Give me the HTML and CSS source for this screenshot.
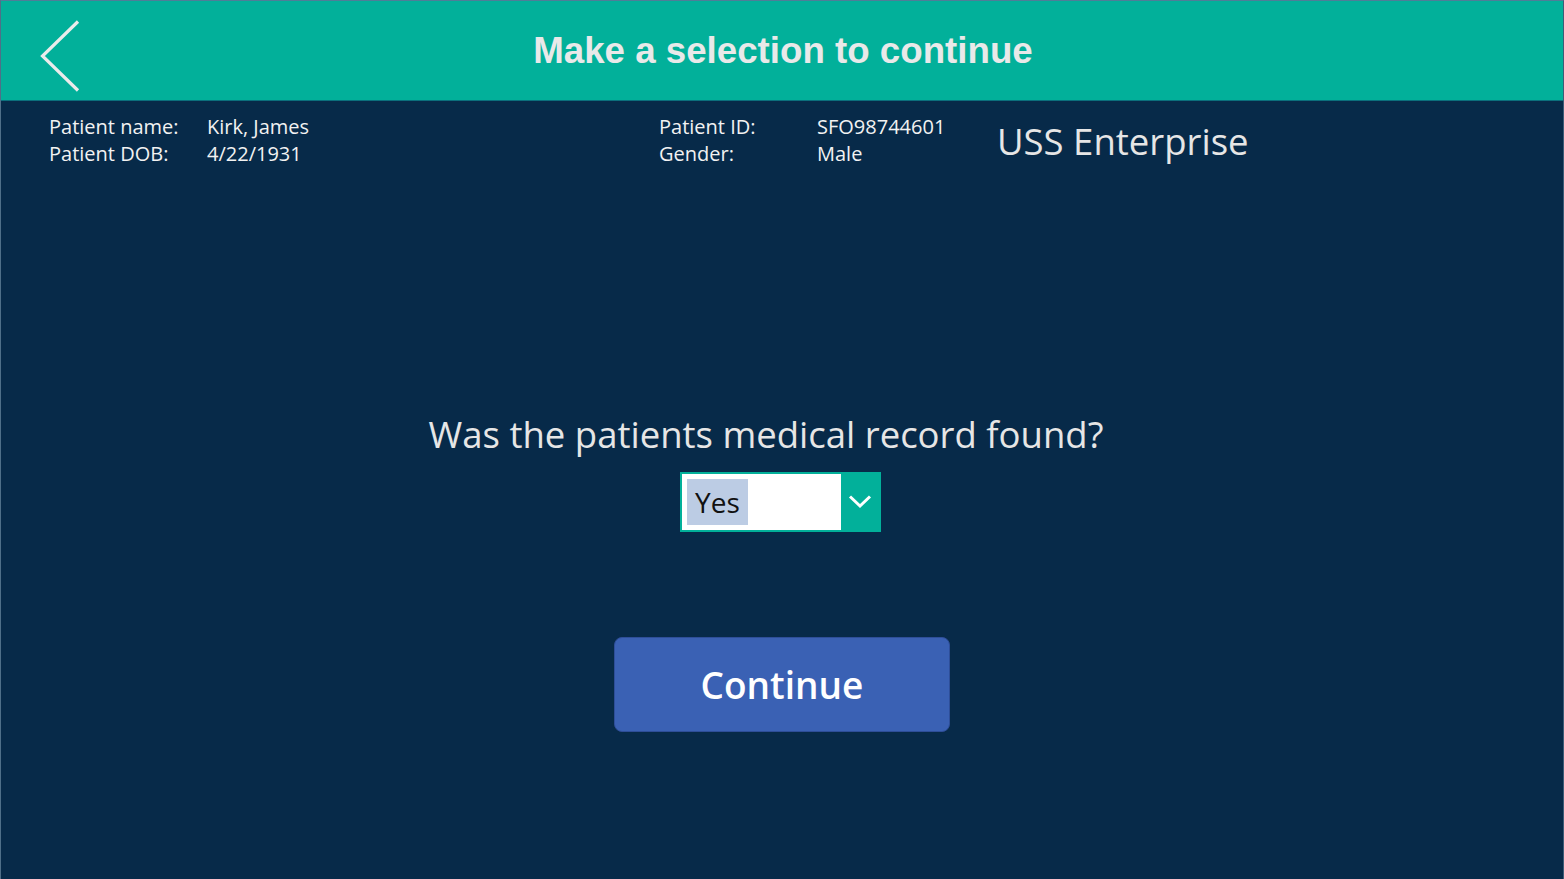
FILE: index.html
```html
<!DOCTYPE html>
<html lang="en">
<head>
<meta charset="utf-8">
<title>Make a selection to continue</title>
<link rel="stylesheet" href="styles.css">
</head>
<body>
<div class="screen">
  <header class="topbar">
    <button class="back" aria-label="Back">
      <svg width="40" height="72" viewBox="0 0 40 72"><polyline points="38,1.5 2.5,36 38,70.5" fill="none" stroke="#ebebeb" stroke-width="3.2"/></svg>
    </button>
    <h1 class="title">Make a selection to continue</h1>
  </header>
  <section class="info">
    <div class="group g1">
      <span class="label">Patient name:</span><span class="value">Kirk, James</span>
      <span class="label">Patient DOB:</span><span class="value">4/22/1931</span>
    </div>
    <div class="group g2">
      <span class="label">Patient ID:</span><span class="value">SFO98744601</span>
      <span class="label">Gender:</span><span class="value">Male</span>
    </div>
    <div class="ship">USS Enterprise</div>
  </section>
  <main class="content">
    <p class="question">Was the patients medical record found?</p>
    <div class="dropdown">
      <div class="field"><span class="selected">Yes</span></div>
      <div class="chev">
        <svg width="24" height="14" viewBox="0 0 24 14"><polyline points="2,1.5 12,11 22,1.5" fill="none" stroke="#ffffff" stroke-width="3"/></svg>
      </div>
    </div>
    <button class="continue">Continue</button>
  </main>
</div>
</body>
</html>
```
FILE: styles.css
```css
* { box-sizing: border-box; }
html, body { margin: 0; padding: 0; }
body {
  width: 1564px;
  height: 879px;
  overflow: hidden;
  background: #072a49;
  font-family: "Open Sans", "Noto Sans", sans-serif;
}
.screen {
  width: 1564px;
  height: 879px;
  display: flex;
  flex-direction: column;
  border-top: 1px solid #4f7d98;
  border-left: 1px solid #4f6f88;
  border-right: 1px solid #3d5d78;
  background: #072a49;
}
.topbar {
  height: 100px;
  flex: none;
  background: #02b09a;
  border-bottom: 1px solid #0b6f7c;
  display: flex;
  align-items: center;
  position: relative;
}
.back {
  position: absolute;
  left: 39px;
  top: 19px;
  width: 40px;
  height: 72px;
  padding: 0;
  border: 0;
  background: transparent;
  display: flex;
}
.title {
  flex: 1;
  margin: 0;
  text-align: center;
  font-family: "Liberation Sans", Arial, sans-serif;
  font-weight: bold;
  font-size: 36.7px;
  color: #e9e9e9;
  padding-left: 2px;
}
.info {
  display: flex;
  padding: 12px 0 0 48px;
  color: #f2f2f2;
  font-size: 20px;
}
.group {
  display: grid;
  grid-template-columns: 158px auto;
  line-height: 27px;
  align-content: start;
}
.g1 { width: 610px; }
.g2 { width: 338px; }
.ship {
  font-size: 36.5px;
  color: #e6e6e6;
  margin-top: 6px;
  line-height: 44px;
}
.content {
  display: flex;
  flex-direction: column;
  align-items: center;
  padding-top: 242px;
}
.question {
  margin: 0;
  font-size: 36.5px;
  line-height: 50px;
  color: #e6e6e6;
  padding-right: 32px;
}
.dropdown {
  margin-top: 13px;
  margin-right: 3px;
  width: 201px;
  height: 60px;
  border: 2px solid #02b09a;
  display: flex;
  background: #ffffff;
}
.field {
  flex: 1;
  padding: 5px;
  display: flex;
  align-items: stretch;
}
.selected {
  background: #bccce4;
  color: #111;
  font-size: 28px;
  padding: 0 8px;
  display: flex;
  align-items: center;
}
.chev {
  width: 38px;
  background: #02b09a;
  display: flex;
  align-items: center;
  justify-content: center;
}
.continue {
  margin-top: 105px;
  width: 336px;
  height: 95px;
  background: #3a61b4;
  border: 1px solid #2e4e98;
  border-radius: 8px;
  color: #ffffff;
  font-family: "Open Sans", "Noto Sans", sans-serif;
  font-weight: 600;
  font-size: 37px;
  padding: 0;
}
```
